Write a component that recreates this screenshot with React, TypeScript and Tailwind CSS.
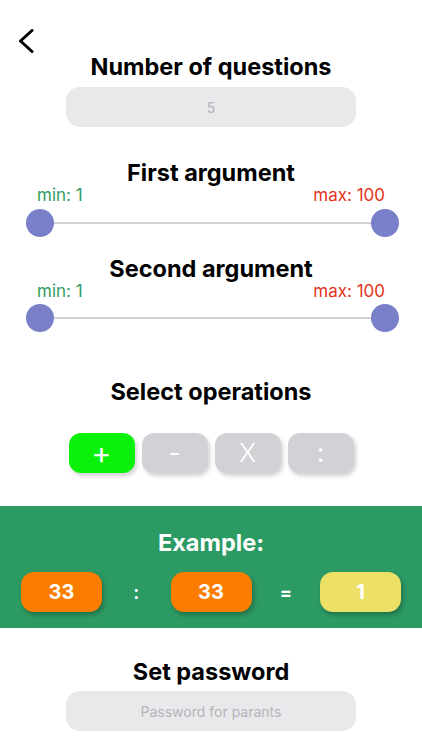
import React from "react";

const font = { fontFamily: "Inter, 'Noto Sans', sans-serif" };

function Slider() {
  return (
    <div className="relative ml-[26px] mr-[23px] h-[28px] flex items-center">
      <div className="absolute left-[14px] right-[14px] top-[13px] h-[2px] bg-[#d1d1d6]" />
      <div className="relative w-[28px] h-[28px] rounded-full bg-[#7a7fc9]" />
      <div className="flex-1" />
      <div className="relative w-[28px] h-[28px] rounded-full bg-[#7a7fc9]" />
    </div>
  );
}

function Labels() {
  return (
    <div className="flex justify-between pl-[37px] pr-[37px] h-[20px] items-center text-[17px] leading-[20px]">
      <span className="text-[#2f9c63]">min: 1</span>
      <span className="text-[#e5341b]">max: 100</span>
    </div>
  );
}

export default function App() {
  return (
    <div className="w-[422px] h-[750px] bg-white overflow-hidden" style={font}>
      <div className="pt-[29px] pl-[17px] h-[53px]">
        <svg width="18" height="24" viewBox="0 0 18 24" fill="none">
          <path d="M15 1.5 L3.5 12 L15 22.5" stroke="#000" strokeWidth="3" strokeLinecap="round" strokeLinejoin="round" />
        </svg>
      </div>
      <div className="text-center text-[23.5px] leading-[28px] font-bold text-black">Number of questions</div>
      <div className="mt-[6px] mx-auto w-[290px] h-[40px] rounded-[14px] bg-[#e9e9eb] flex items-center justify-center text-[14px] text-[#b4b4b9]">
        5
      </div>

      <div className="mt-[34px] text-center text-[23.5px] leading-[24px] font-bold text-black">First argument</div>
      <Labels />
      <div className="mt-[4px]">
        <Slider />
      </div>

      <div className="mt-[20px] text-center text-[23.5px] leading-[24px] font-bold text-black">Second argument</div>
      <Labels />
      <div className="mt-[3px]">
        <Slider />
      </div>

      <div className="mt-[48px] text-center text-[23.5px] leading-[24px] font-bold text-black">Select operations</div>
      <div className="mt-[29px] flex justify-center gap-[7px]">
        <div className="w-[66px] h-[40px] rounded-[12px] bg-[#0af20a] flex items-center justify-center text-white text-[30px] leading-none shadow-[2px_3px_4px_rgba(0,0,0,0.18)]">+</div>
        <div className="w-[66px] h-[40px] rounded-[12px] bg-[#d1d1d6] flex items-center justify-center text-white text-[26px] leading-none shadow-[2px_3px_4px_rgba(0,0,0,0.18)]">-</div>
        <div className="w-[66px] h-[40px] rounded-[12px] bg-[#d1d1d6] flex items-center justify-center text-white text-[26px] font-light leading-none shadow-[2px_3px_4px_rgba(0,0,0,0.18)]">X</div>
        <div className="w-[66px] h-[40px] rounded-[12px] bg-[#d1d1d6] flex items-center justify-center text-white text-[26px] leading-none shadow-[2px_3px_4px_rgba(0,0,0,0.18)]">:</div>
      </div>

      <div className="mt-[33px] h-[122px] bg-[#2c9a63] pt-[25px]">
        <div className="text-center text-[23.5px] leading-[24px] font-bold text-white">Example:</div>
        <div className="mt-[17px] flex items-center justify-between px-[21px]">
          <div className="w-[81px] h-[40px] rounded-[13px] bg-[#fa7d00] flex items-center justify-center text-white font-bold text-[20px] shadow-[2px_3px_4px_rgba(0,0,0,0.25)]">33</div>
          <div className="w-[20px] text-center text-white font-bold text-[18px]">:</div>
          <div className="w-[81px] h-[40px] rounded-[13px] bg-[#fa7d00] flex items-center justify-center text-white font-bold text-[20px] shadow-[2px_3px_4px_rgba(0,0,0,0.25)]">33</div>
          <div className="w-[20px] text-center text-white font-bold text-[18px]">=</div>
          <div className="w-[81px] h-[40px] rounded-[13px] bg-[#ede067] flex items-center justify-center text-white font-bold text-[20px] shadow-[2px_3px_4px_rgba(0,0,0,0.25)]">1</div>
        </div>
      </div>

      <div className="mt-[32px] text-center text-[23.5px] leading-[24px] font-bold text-black">Set password</div>
      <div className="mt-[7px] mx-auto w-[290px] h-[40px] rounded-[14px] bg-[#e9e9eb] flex items-center justify-center text-[14px] text-[#b4b4b9]">
        Password for parants
      </div>
    </div>
  );
}
